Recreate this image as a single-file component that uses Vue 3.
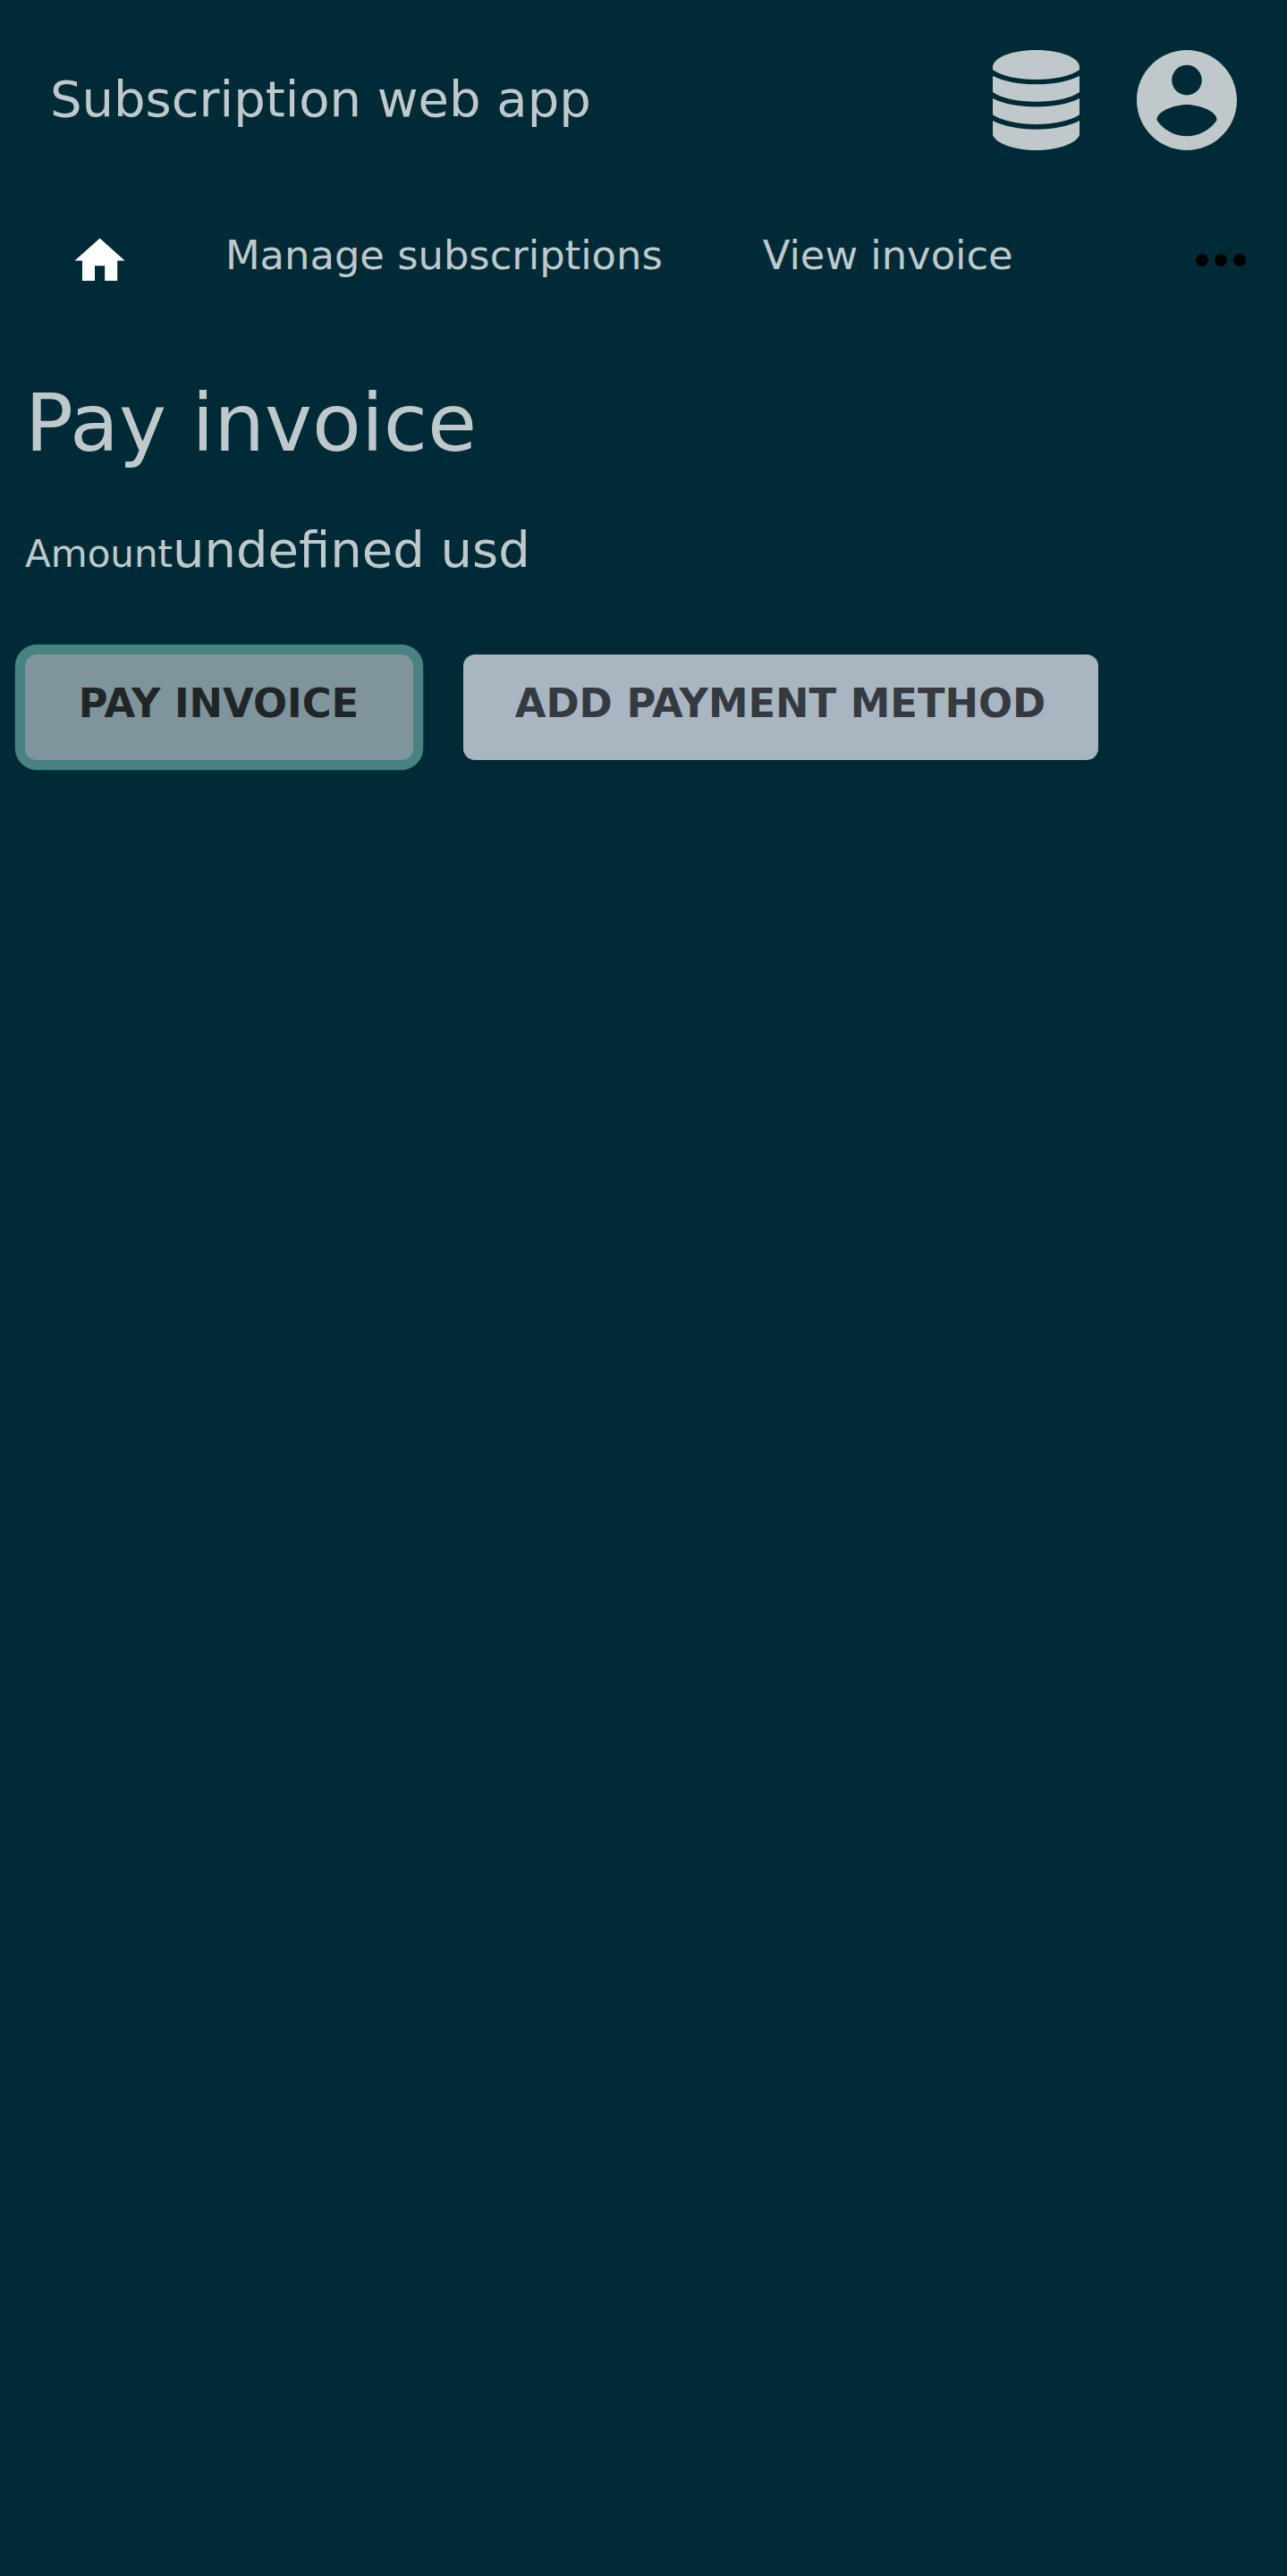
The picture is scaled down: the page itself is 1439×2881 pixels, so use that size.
<script setup>
const links = ['Manage subscriptions', 'View invoice']
</script>

<template>
  <div class="page">
    <header class="header">
      <div class="brand">Subscription web app</div>
      <div class="tools">
        <svg class="db" viewBox="0 0 97 112">
          <path d="M0 18C2 7 24 0 48.500 0S95 7 97 18V22C87 29 69 33 48.500 33S10 29 0 22Z" />
          <path d="M0 29C12 35 29 38.300 48.500 38.300S85 35 97 29V47C87 54 69 57.800 48.500 57.800S10 54 0 47Z" />
          <path d="M0 54C12 60 29 63.500 48.500 63.500S85 60 97 54V72.300C87 79 69 83 48.500 83S10 79 0 72.300Z" />
          <path d="M0 79C12 85 29 88.700 48.500 88.700S85 85 97 79V95C93 105 72 112 48.500 112S4 105 0 95Z" />
        </svg>
        <svg class="user" viewBox="2 2 20 20">
          <path d="M12 2C6.480 2 2 6.480 2 12s4.480 10 10 10 10-4.480 10-10S17.520 2 12 2zm0 3c1.660 0 3 1.340 3 3s-1.340 3-3 3-3-1.340-3-3 1.340-3 3-3zm0 14.200c-2.500 0-4.710-1.280-6-3.220.03-1.990 4-3.080 6-3.080 1.990 0 5.970 1.090 6 3.080-1.290 1.940-3.500 3.220-6 3.220z" />
        </svg>
      </div>
    </header>
    <nav class="nav">
      <svg class="home" viewBox="0 0 24 24"><path d="M10 20v-6h4v6h5v-8h3L12 3 2 12h3v8z" /></svg>
      <a v-for="link in links" :key="link" class="link">{{ link }}</a>
      <svg class="more" viewBox="0 0 56 14">
        <circle cx="7" cy="7" r="7" /><circle cx="28" cy="7" r="7" /><circle cx="49" cy="7" r="7" />
      </svg>
    </nav>
    <main class="main">
      <h1 class="title">Pay invoice</h1>
      <p class="amount"><span class="label">Amount</span><span>undefined usd</span></p>
      <div class="actions">
        <button class="btn pay">PAY INVOICE</button>
        <button class="btn add">ADD PAYMENT METHOD</button>
      </div>
    </main>
  </div>
</template>

<style>
body { margin: 0; background: #002b36; }
</style>
<style scoped>
.page { min-height: 2881px; background: #002b36; color: #bfc9cc; font-family: "DejaVu Sans", sans-serif; box-sizing: border-box; }
.header { display: flex; align-items: center; justify-content: space-between; height: 224px; padding: 0 56px; box-sizing: border-box; }
.brand { font-size: 56px; line-height: 84px; padding-bottom: 3px; }
.tools { display: flex; align-items: center; gap: 64px; fill: #bfc9cc; }
.db { width: 97px; height: 112px; }
.user { width: 112px; height: 112px; }
.nav { display: flex; align-items: center; height: 134px; }
.home { width: 67.2px; height: 67.2px; margin-left: 78.400px; padding-top: 2px; fill: #fff; }
.link { font-size: 44.800px; line-height: 67px; margin-left: 106.400px; padding-bottom: 11px; }
.link + .link { margin-left: 112px; }
.more { width: 56px; height: 14px; margin-left: auto; margin-right: 46px; fill: #000; }
.main { padding: 48px 28px 0; }
.title { margin: 0; font-size: 89.600px; line-height: 134px; font-weight: 400; }
.amount { margin: 33px 0 0; font-size: 56px; line-height: 83px; }
.label { font-size: 42px; line-height: 1; }
.actions { display: flex; gap: 56px; margin-top: 75.600px; }
.btn { border: 0; border-radius: 13px; height: 118.700px; padding: 0 1px 9px 0; font: 700 44.800px/67px "DejaVu Sans", sans-serif; }
.pay { width: 434px; background: #80949b; color: #202628; box-shadow: 0 0 0 11.200px #488283; }
.add { width: 710px; background: #a9b5c1; color: #353a41; }
</style>
